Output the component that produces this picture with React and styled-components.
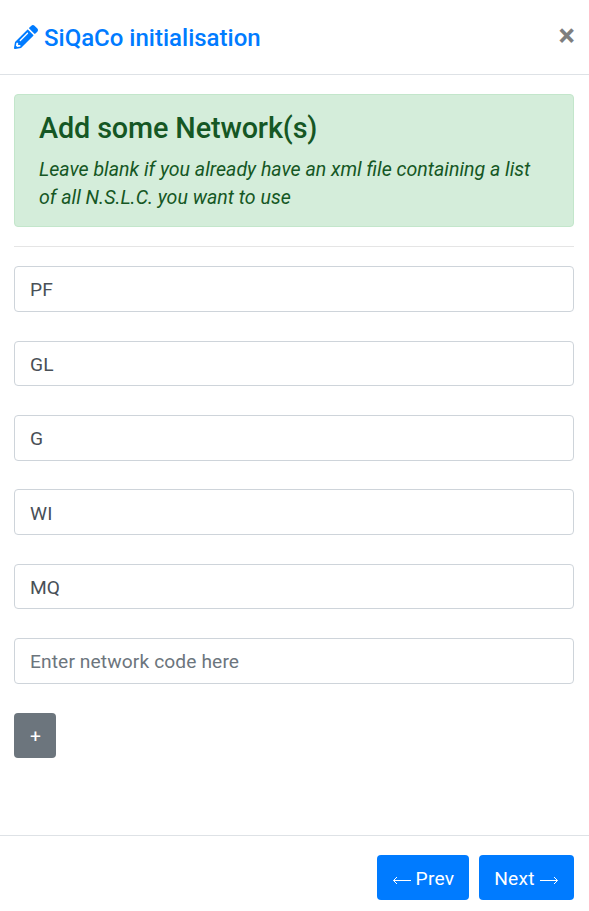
import React from "react";
import styled, { createGlobalStyle } from "styled-components";
import { FaPencilAlt } from "react-icons/fa";

const GlobalStyle = createGlobalStyle`
  *, *::before, *::after { box-sizing: border-box; }
  html, body { margin: 0; background: #fff; }
  body { font-family: Roboto, sans-serif; font-size: 19.2px; line-height: 1.5; color: #212529; }
`;

const Dialog = styled.main`
  display: flex;
  flex-direction: column;
  height: 911px;
  overflow: hidden;
`;

const Header = styled.header`
  display: flex;
  justify-content: space-between;
  align-items: flex-start;
  height: 75px;
  padding: 20px 14px 0;
  border-bottom: 1px solid #dee2e6;
`;

const Title = styled.h5`
  display: flex;
  align-items: center;
  gap: 6px;
  margin: 0;
  font-size: 24px;
  font-weight: 500;
  line-height: 36px;
  color: #007bff;
  white-space: nowrap;
`;

const PencilIcon = styled(FaPencilAlt)`
  width: 24px;
  height: 24px;
  margin-bottom: 2px;
`;

const CloseButton = styled.button`
  margin: 0;
  padding: 0;
  border: 0;
  background: transparent;
  font: 700 31px/31px Roboto, sans-serif;
  color: #000;
  opacity: 0.5;
`;

const Body = styled.section`
  flex: 1;
  padding: 19px 15px 0 14px;
`;

const Alert = styled.div`
  height: 133px;
  padding: 15px 24px 0;
  border: 1px solid #c3e6cb;
  border-radius: 4px;
  background: #d4edda;
  color: #155724;
`;

const AlertHeading = styled.h4`
  margin: 0 0 9px;
  font-size: 28.8px;
  font-weight: 500;
  line-height: 37px;
  letter-spacing: -0.13px;
`;

const AlertText = styled.p`
  margin: 0;
  font-size: 19.57px;
  font-style: italic;
  line-height: 28px;
`;

const Divider = styled.hr`
  height: 1px;
  margin: 19px 0 19.2px;
  border: 0;
  background: #e5e5e5;
`;

const Fields = styled.div`
  display: grid;
  gap: 28.8px;
`;

const Input = styled.input`
  display: block;
  width: 100%;
  height: 45.6px;
  padding: 8.2px 15px 6.4px;
  border: 1px solid #ced4da;
  border-radius: 4px;
  background: #fff;
  font: 400 19.2px/28.8px Roboto, sans-serif;
  letter-spacing: 0.11px;
  color: #495057;
  &::placeholder { color: #6c757d; opacity: 1; }
`;

const Button = styled.button`
  display: flex;
  align-items: center;
  justify-content: center;
  gap: 5px;
  width: ${(p) => p.$width}px;
  height: 45px;
  padding: ${(p) => (p.$secondary ? "4.4px 0 0 1px" : "2px 0 0")};
  border: 0;
  border-radius: 4px;
  background: ${(p) => (p.$secondary ? "#6c757d" : "#007bff")};
  font: 400 19.2px/28px Roboto, sans-serif;
  letter-spacing: 0.25px;
  color: #fff;
`;

const Footer = styled.footer`
  display: flex;
  justify-content: flex-end;
  gap: 10px;
  height: 76px;
  padding: 19px 15px 0;
  border-top: 1px solid #dee2e6;
`;

const Arrow = ({ left }) => (
  <svg width="19" height="12" viewBox="0 0 19 12" fill="none" stroke="currentColor" aria-hidden="true">
    <path d={left ? "M19 7.5H1.5M5 4L1.5 7.5L5 11" : "M0 7.5H17.5M14 4L17.5 7.5L14 11"} />
  </svg>
);

const codes = ["PF", "GL", "G", "WI", "MQ", ""];

export default function App() {
  return (
    <>
      <GlobalStyle />
      <Dialog>
        <Header>
          <Title><PencilIcon />SiQaCo initialisation</Title>
          <CloseButton aria-label="Close">×</CloseButton>
        </Header>
        <Body>
          <Alert>
            <AlertHeading>Add some Network(s)</AlertHeading>
            <AlertText>Leave blank if you already have an xml file containing a list of all N.S.L.C. you want to use</AlertText>
          </Alert>
          <Divider />
          <Fields>
            {codes.map((code, i) => (
              <Input key={i} defaultValue={code} placeholder="Enter network code here" />
            ))}
            <Button $secondary $width={42}>+</Button>
          </Fields>
        </Body>
        <Footer>
          <Button $width={92}><Arrow left />Prev</Button>
          <Button $width={95}>Next<Arrow /></Button>
        </Footer>
      </Dialog>
    </>
  );
}
